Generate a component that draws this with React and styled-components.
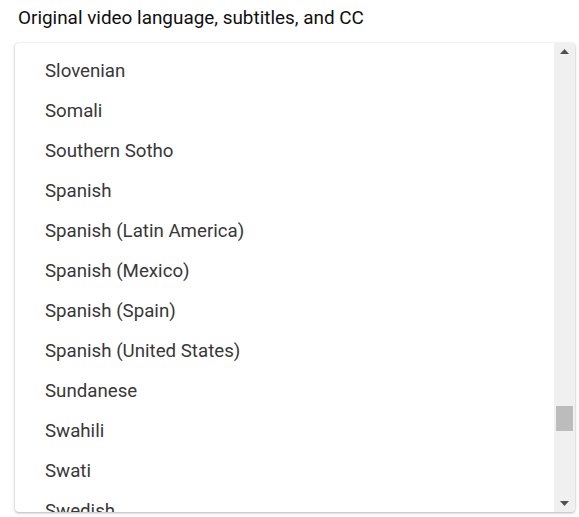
import React from "react";
import styled, { createGlobalStyle } from "styled-components";

const Global = createGlobalStyle`
  html, body { margin: 0; padding: 0; background: #fff; }
  body { font-family: Roboto, "Noto Sans", Arial, sans-serif; }
`;

const Page = styled.div`
  width: 579px;
  height: 517px;
  box-sizing: border-box;
  padding: 6px 4px 5px 15px;
  display: flex;
  flex-direction: column;
`;

const Title = styled.div`
  font-size: 18.9px;
  color: #0f0f0f;
  line-height: 24px;
  padding-left: 3px;
  height: 37px;
`;

const Panel = styled.div`
  flex: 1;
  display: flex;
  background: #fff;
  border-radius: 4px;
  box-shadow: 0 1px 3px rgba(0, 0, 0, 0.3), 0 0 1px rgba(0, 0, 0, 0.12);
  overflow: hidden;
  min-height: 0;
`;

const List = styled.ul`
  flex: 1;
  margin: 0;
  padding: 8px 0 0 0;
  list-style: none;
  overflow: hidden;
`;

const Item = styled.li`
  height: 40px;
  display: flex;
  align-items: center;
  padding-left: 30px;
  font-size: 18.7px;
  color: #383838;
`;

const Track = styled.div`
  width: 21px;
  background: #f0f0f0;
  display: flex;
  flex-direction: column;
  align-items: center;
`;

const ArrowBtn = styled.div`
  height: 17px;
  width: 100%;
  display: flex;
  align-items: center;
  justify-content: center;
`;

const Rail = styled.div`
  flex: 1;
  width: 100%;
  display: flex;
  flex-direction: column;
  align-items: center;
`;

const Thumb = styled.div`
  width: 17px;
  height: 25px;
  background: #bcbcbc;
  margin-top: ${(p) => p.$offset}px;
`;

const items = [
  "Slovenian",
  "Somali",
  "Southern Sotho",
  "Spanish",
  "Spanish (Latin America)",
  "Spanish (Mexico)",
  "Spanish (Spain)",
  "Spanish (United States)",
  "Sundanese",
  "Swahili",
  "Swati",
  "Swedish",
  "Tajik",
];

const Arrow = ({ down }) => (
  <svg width="9" height="5" viewBox="0 0 9 5">
    <path d={down ? "M0 0H9L4.5 5Z" : "M0 5H9L4.5 0Z"} fill="#505050" />
  </svg>
);

export default function App() {
  return (
    <>
      <Global />
      <Page>
        <Title>Original video language, subtitles, and CC</Title>
        <Panel>
          <List>
            {items.map((t) => (
              <Item key={t}>{t}</Item>
            ))}
          </List>
          <Track>
            <ArrowBtn>
              <Arrow />
            </ArrowBtn>
            <Rail>
              <Thumb $offset={346} />
            </Rail>
            <ArrowBtn>
              <Arrow down />
            </ArrowBtn>
          </Track>
        </Panel>
      </Page>
    </>
  );
}
